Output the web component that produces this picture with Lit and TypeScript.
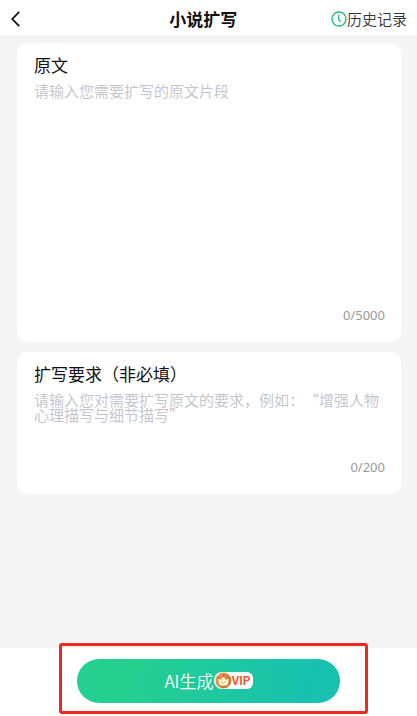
import { LitElement, html, css } from "lit";
import { customElement, property, state } from "lit/decorators.js";

@customElement("prompt-card")
class PromptCard extends LitElement {
  @property() heading = "";
  @property() hint = "";
  @property({ type: Number }) limit = 200;
  @property({ type: Boolean, reflect: true }) tall = false;
  @state() private count = 0;

  static styles = css`
    :host {
      display: block;
    }
    .card {
      display: flex;
      flex-direction: column;
      padding: 11px 16px 17px 17px;
      border-radius: 10px;
      background: #fff;
    }
    .heading {
      font-size: 17px;
      font-weight: 400;
      line-height: 22px;
      color: #111;
    }
    .field {
      display: block;
      box-sizing: border-box;
      width: 100%;
      height: 60px;
      margin: 7px 0 5px;
      padding: 0;
      border: 0;
      outline: 0;
      resize: none;
      background: none;
      font: inherit;
      font-size: 15px;
      line-height: 15px;
      text-spacing-trim: space-all;
      color: #222;
    }
    :host([tall]) .field {
      height: 217px;
    }
    .field::placeholder {
      color: #bfc3cb;
      opacity: 1;
    }
    .count {
      align-self: flex-end;
      font-family: "Noto Sans", "Noto Sans CJK SC", sans-serif;
      font-size: 13px;
      font-weight: 400;
      line-height: 20px;
      color: #999;
    }
  `;

  private onInput(e: Event) {
    this.count = (e.target as HTMLTextAreaElement).value.length;
  }

  render() {
    return html`
      <div class="card">
        <label class="heading" for="field">${this.heading}</label>
        <textarea
          class="field"
          id="field"
          maxlength=${this.limit}
          placeholder=${this.hint}
          @input=${this.onInput}
        ></textarea>
        <div class="count">${this.count}/${this.limit}</div>
      </div>
    `;
  }
}

@customElement("app-root")
class AppRoot extends LitElement {
  static styles = css`
    :host {
      display: flex;
      flex-direction: column;
      min-height: 100vh;
      background: #f4f4f4;
      font-family: "Noto Sans CJK SC", "Noto Sans", sans-serif;
      font-weight: 350;
    }
    button {
      border: 0;
      padding: 0;
      background: none;
      font: inherit;
      cursor: pointer;
    }
    .bar {
      display: grid;
      grid-template-columns: 19fr auto 20fr;
      align-items: center;
      height: 35px;
      padding: 2px 10px 0 8px;
      box-sizing: border-box;
      background: #fff;
    }
    .back {
      justify-self: start;
      display: flex;
    }
    .title {
      margin: 0;
      font-size: 17px;
      line-height: 24px;
      font-weight: 700;
      color: #111;
    }
    .history {
      justify-self: end;
      display: flex;
      align-items: center;
      font-size: 15px;
      line-height: 22px;
      color: #333;
      text-decoration: none;
    }
    .main {
      flex: 1;
      display: flex;
      flex-direction: column;
      gap: 10px;
      padding: 8px 16px 8px 17px;
    }
    .footer {
      padding: 11px 77px 13px;
      background: #fff;
    }
    .action {
      position: relative;
    }
    .generate {
      display: flex;
      align-items: center;
      justify-content: center;
      width: 100%;
      height: 44px;
      padding-bottom: 1px;
      border-radius: 22px;
      background: linear-gradient(100deg, #24cf8f 20%, #18c1b0 90%);
      font-size: 17px;
      color: #fff;
    }
    .vip {
      display: flex;
      align-items: center;
      height: 17px;
      padding: 0 2px 0 1px;
      border-radius: 8px 6px 6px 8px;
      background: #fff;
      font-family: "Liberation Sans Narrow", Roboto, sans-serif;
      font-size: 12px;
      font-weight: 700;
      color: #e8603c;
    }
    .frame {
      position: absolute;
      inset: -16px -28px -11px -18px;
      border: 3px solid #ee2a20;
      border-radius: 3px;
      pointer-events: none;
    }
    svg {
      display: block;
    }
  `;

  render() {
    return html`
      <header class="bar" lang="zh-CN">
        <button class="back" aria-label="返回">
          <svg width="16" height="20" viewBox="0 0 16 20" fill="none">
            <path d="M11.2 2.8 4.3 10l6.9 7.2" stroke="#111" stroke-width="1.8" />
          </svg>
        </button>
        <h1 class="title">小说扩写</h1>
        <a class="history" href="#history">
          <svg width="16" height="16" viewBox="0 0 16 16" fill="none" stroke="#2bb793">
            <circle cx="8" cy="8" r="7" stroke-width="1.4" />
            <path d="M7.6 3.8v4.4l2 2.4" stroke-width="1.4" />
          </svg>
          <span>历史记录</span>
        </a>
      </header>
      <main class="main" lang="zh-CN">
        <prompt-card
          tall
          heading="原文"
          hint="请输入您需要扩写的原文片段"
          .limit=${5000}
        ></prompt-card>
        <prompt-card
          heading="扩写要求（非必填）"
          hint="请输入您对需要扩写原文的要求，例如：“增强人物心理描写与细节描写”"
          .limit=${200}
        ></prompt-card>
      </main>
      <footer class="footer" lang="zh-CN">
        <div class="action">
          <button class="generate">
            <span>AI生成</span>
            <span class="vip">
              <svg width="17" height="17" viewBox="0 0 17 17">
                <defs>
                  <linearGradient id="coin" x1="0" y1="0" x2="1" y2="1">
                    <stop offset="0" stop-color="#f2a45c" />
                    <stop offset="1" stop-color="#b86c28" />
                  </linearGradient>
                </defs>
                <circle cx="8.5" cy="8.5" r="7.9" fill="url(#coin)" />
                <path
                  d="M3 6 6 8l2.5-4L11 8l3-2-1.2 7q-4.3 1.6-8.6 0Z"
                  fill="#fff3cf"
                />
                <path d="m6.4 9.4 2.1 2 2.1-2" fill="none" stroke="#e9a94c" />
                <circle cx="3.4" cy="5.8" r="1" fill="#e8502e" />
                <circle cx="8.5" cy="3.8" r="1" fill="#e8502e" />
                <circle cx="13.6" cy="5.8" r="1" fill="#e8502e" />
              </svg>
              <span>VIP</span>
            </span>
          </button>
          <div class="frame"></div>
        </div>
      </footer>
    `;
  }
}
